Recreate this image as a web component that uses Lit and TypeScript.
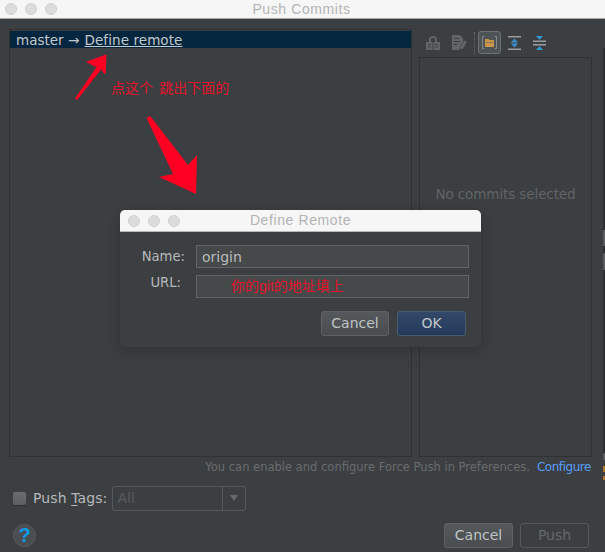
import { LitElement, html, css, svg } from "lit";
import { customElement } from "lit/decorators.js";

const lights = html`<span class="lights"><i></i><i></i><i></i></span>`;

@customElement("app-root")
export class AppRoot extends LitElement {
  static styles = css`
    :host { display: block; width: 605px; height: 552px; position: relative; overflow: hidden; background: #3c3f41; font-family: "DejaVu Sans", sans-serif; color: #bbbbbb; }
    .titlebar { height: 19px; background: #f6f6f6; border-bottom: 1px solid #a9a9a9; box-sizing: border-box; display: flex; align-items: center; justify-content: center; padding-right: 2px; position: relative; font: 14px "Liberation Sans", sans-serif; color: #b4b4b4; letter-spacing: .6px; }
    .lights { position: absolute; left: 5px; top: 3px; display: flex; gap: 8px; }
    .lights i { width: 12px; height: 12px; border-radius: 50%; background: #dcdcdc; border: .5px solid #d0d0d0; box-sizing: border-box; }
    .main { display: flex; flex-direction: column; height: 533px; }
    .panels { display: flex; gap: 7px; padding: 10px 0 0 9px; height: 428px; box-sizing: content-box; }
    .left { width: 403px; border: 1px solid #2f3133; box-sizing: border-box; padding-top: 1px; }
    .row { height: 17px; background: #04263f; font-size: 13.5px; line-height: 19px; padding-left: 6px; color: #c4c8ca; white-space: nowrap; }
    .row u { text-underline-offset: 1px; margin-left: 1px; letter-spacing: .08px; }
    .right { width: 173px; display: flex; flex-direction: column; }
    .tools { height: 27px; display: flex; align-items: center; padding-left: 7px; margin-bottom: 1px; }
    .tools svg { display: block; flex: none; }
    .doc { margin-left: 12px; }
    .sep { width: 1px; height: 22px; margin: 0 3px 0 7px; border-left: 1px dotted #6a6d70; box-sizing: border-box; }
    .active { width: 23px; height: 23px; border: 1px solid #6d7174; border-radius: 3px; background: #4e5356; box-sizing: border-box; display: flex; align-items: center; justify-content: center; margin-right: 7px; }
    .coll { margin-left: 12px; }
    .rp { flex: 1; border: 1px solid #2f3133; box-sizing: border-box; display: flex; justify-content: center; padding-top: 128px; font-size: 13.5px; color: #606467; line-height: 17px; letter-spacing: -.1px; }
    .note { height: 18px; padding: 2px 14px 0 0; box-sizing: border-box; display: flex; justify-content: flex-end; gap: 7px; font-size: 11.5px; line-height: 17px; color: #696c6e; }
    .note a { color: #589df6; font-size: 12px; letter-spacing: -.45px; }
    .tags { display: flex; align-items: center; height: 24px; margin-top: 11px; padding-left: 13px; }
    .cb { width: 13px; height: 13px; border-radius: 2px; background: linear-gradient(#6a6d6f, #5c5f61); box-shadow: 0 1px 0 #2c2e30; margin-right: 7px; }
    .tags label { font-size: 14px; color: #b5b9bb; margin-right: 5px; white-space: nowrap; letter-spacing: .1px; }
    .tags label u { text-underline-offset: 2px; }
    .combo { width: 134px; height: 25px; border: 1px solid #56595b; border-radius: 3px; box-sizing: border-box; display: flex; align-items: center; font-size: 14px; color: #595c5e; padding-left: 4px; }
    .combo span { flex: 1; }
    .combo b { width: 22px; height: 100%; border-left: 1px solid #56595b; display: flex; align-items: center; justify-content: center; }
    .combo b::after { content: ""; border: 4px solid transparent; border-top: 6px solid #66696b; border-bottom: 0; }
    .bottom { display: flex; align-items: center; height: 25px; margin-top: 13px; padding: 0 16px 0 13px; gap: 7px; }
    .help { width: 23px; height: 23px; border-radius: 50%; background: #4a4e50; border: 1px solid #55595b; box-sizing: border-box; color: #0a9be8; font: bold 20px/21px "Liberation Sans", sans-serif; text-align: center; margin-right: auto; }
    .btn { width: 69px; height: 25px; border-radius: 3px; box-sizing: border-box; display: flex; align-items: center; justify-content: center; padding-bottom: 2px; font-size: 14px; color: #bfc3c5; background: linear-gradient(#55595c, #494d4f); border: 1px solid #5e6264; }
    .btn.off { background: none; border-color: #55585a; color: #65686a; }
    .btn.ok { background: linear-gradient(#34496a, #233a5b); border-color: #4a5a70; color: #c0c6cc; }
    .dialog .btn.c { width: 68px; }
    .dialog { position: absolute; left: 120px; top: 210px; width: 361px; height: 137px; background: #3c3f41; border-radius: 5px; overflow: hidden; box-shadow: 0 3px 14px rgba(0,0,0,.22); }
    .dtitle { height: 22px; background: #f6f6f6; border-bottom: 1px solid #b9b9b9; box-sizing: border-box; text-align: center; font: 14px/21px "Liberation Sans", sans-serif; color: #b4b4b4; position: relative; letter-spacing: .6px; }
    .dtitle .lights { left: 8px; top: 5px; }
    .form { display: grid; grid-template-columns: 65px 273px; gap: 6px 11px; margin-top: 13px; }
    .lab { text-align: right; font-size: 13.2px; color: #b5b9bb; line-height: 24px; }
    .lab.url { padding-right: 4px; line-height: 15px; }
    .field { height: 23px; background: #45494a; border: 1px solid #646464; box-sizing: border-box; font-size: 14px; line-height: 22px; padding-left: 5px; color: #bbbbbb; }
    .cn { color: #e2132c; font: 14px/21px "Liberation Sans", "Noto Sans CJK SC", sans-serif; padding-left: 34px; }
    .dbtns { display: flex; justify-content: flex-end; gap: 8px; margin: 13px 15px 0 0; }
    .ann { position: absolute; left: 0; top: 0; pointer-events: none; }
    .annt { position: absolute; left: 111px; top: 78px; font: 14px/19px "Noto Sans CJK SC", sans-serif; color: #e2132c; white-space: pre; }
    .edge { position: absolute; right: 0; top: 48px; width: 2px; height: 442px; background: linear-gradient(#2b2d2e 0 182px, #5a5d5f 182px 198px, #2b2d2e 198px 205px, #5a5d5f 205px 222px, #2b2d2e 222px 405px, #5a5d5f 405px 412px, #3c3f41 412px 418px, #b3762c 418px 424px, #3c3f41 424px 428px, #b3762c 428px 432px, #3c3f41 432px); }
  `;

  render() {
    return html`
      <div class="titlebar">${lights}Push Commits</div>
      <div class="main">
        <div class="panels">
          <div class="left"><div class="row">master → <u>Define remote</u></div></div>
          <div class="right">
            <div class="tools">
              <svg width="14" height="14" viewBox="0 0 14 14"><path fill="#626568" d="M0 6h14v8H0zM3 6V3.500a4 3.500 0 0 1 8 0V6H9V3.500a2 1.800 0 0 0-4 0V6z"/><path fill="#3c3f41" d="M6.500 5h1v9h-1zM2 8h3v1H2zM9 8h3v1H9zM2 10.500h3v1H2zM9 10.500h3v1H9z"/></svg>
              <svg class="doc" width="15" height="15" viewBox="0 0 15 15"><path fill="#626568" d="M0 0h8l3 3v4l-3 5-1 3H0z"/><path fill="#3c3f41" d="M2 3h5v1H2zM2 6h6v1H2zM2 9h4v1H2z"/><path fill="#626568" d="M8.500 12 12.500 5.500 15 7l-4 6.500-3 1z"/></svg>
              <span class="sep"></span>
              <span class="active"><svg width="15" height="15" viewBox="0 0 15 15"><path fill="none" stroke="#85898c" d="M2.500 1.500h-2v12h2M12.500 1.500h2v12h-2"/><path fill="#c8964a" d="M3 4h3.500l1 1H12v7H3z"/><path fill="#4e5356" d="M4 7h7v1H4z" opacity=".5"/></svg></span>
              <svg width="13" height="14" viewBox="0 0 13 14"><path fill="#9a9d9f" d="M0 0h13v1.500H0zM0 12.500h13V14H0z"/><path fill="#3d8fc9" d="M6.500 2.500 10 6.500H3zM3 7.500h7l-3.500 4z"/></svg>
              <svg class="coll" width="13" height="14" viewBox="0 0 13 14"><path fill="#9a9d9f" d="M0 4.500h13V6H0zM0 8h13v1.500H0z"/><path fill="#2e9ad8" d="M3 0h7L6.500 3.800zM6.500 10.200 10 14H3z"/></svg>
            </div>
            <div class="rp">No commits selected</div>
          </div>
        </div>
        <div class="note"><span>You can enable and configure Force Push in Preferences.</span><a>Configure</a></div>
        <div class="tags">
          <span class="cb"></span><label>Push <u>T</u>ags:</label>
          <div class="combo"><span>All</span><b></b></div>
        </div>
        <div class="bottom">
          <span class="help">?</span>
          <span class="btn">Cancel</span><span class="btn off">Push</span>
        </div>
      </div>

      <div class="dialog">
        <div class="dtitle">${lights}Define Remote</div>
        <div class="form">
          <div class="lab">Name:</div><div class="field">origin</div>
          <div class="lab url">URL:</div><div class="field cn">你的git的地址填上</div>
        </div>
        <div class="dbtns"><span class="btn c">Cancel</span><span class="btn ok">OK</span></div>
      </div>

      <svg class="ann" width="605" height="552" viewBox="0 0 605 552">
        ${svg`<path fill="#fe0022" stroke="#fe0022" stroke-linejoin="round" d="M106 55 87 62 97 67 75.500 98.500 77 99.500 101 69 105 74z"/>
        <path fill="#fe0022" d="M147 119c-.5-2 2.500-4 4-2L188 165 197 155 196 194 159 177 173 174z"/>`}
      </svg>
      <div class="annt">点这个  跳出下面的</div>
      <div class="edge"></div>
    `;
  }
}
